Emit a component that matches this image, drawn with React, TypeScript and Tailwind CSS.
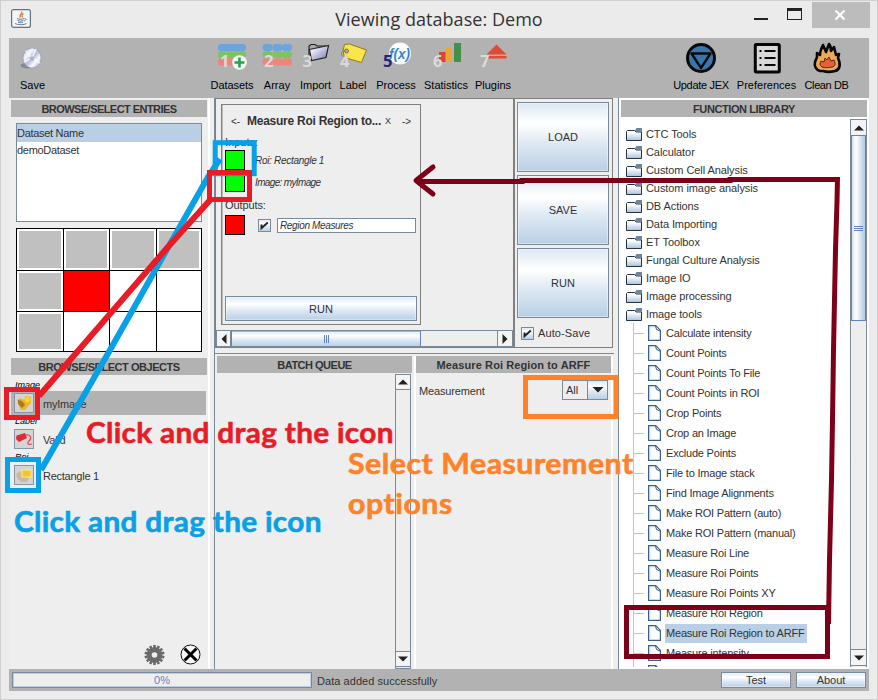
import type { ReactNode } from "react";

const METAL =
  "bg-[linear-gradient(to_bottom,#dde8f3_0%,#ffffff_30%,#dde8f3_60%,#b8cfe5_100%)]";
const METAL_H =
  "bg-[linear-gradient(to_right,#cfdff0_0%,#ffffff_30%,#dde8f3_60%,#b0c8e4_100%)]";

function PanelHeader({ children }: { children: ReactNode }) {
  return (
    <div className="flex h-[17px] shrink-0 items-center justify-center bg-[#b2b2b2] pt-px text-[11px] font-bold whitespace-nowrap text-[#333]">
      {children}
    </div>
  );
}

function Tool({ label, width, children }: { label: ReactNode; width: string; children: ReactNode }) {
  return (
    <div className={`flex h-[60px] shrink-0 flex-col items-center ${width}`}>
      <svg className="h-[38px] w-[40px] overflow-visible" viewBox="0 0 40 38">
        {children}
      </svg>
      <span className="text-[11px] leading-[18px] whitespace-nowrap text-black">{label}</span>
    </div>
  );
}

function Digit({ x, n, fill = "#dadada" }: { x: number; n: string; fill?: string }) {
  return (
    <text x={x} y="28.7" fill={fill} fontSize="16.5" fontWeight="bold" fontFamily="Noto Sans, sans-serif">
      {n}
    </text>
  );
}

function MetalButton({ children, className }: { children: ReactNode; className: string }) {
  return (
    <button
      className={`flex shrink-0 items-center justify-center border border-[#7a8a99] text-[11px] text-[#333] shadow-[inset_0_0_0_1px_#ffffff66] ${METAL} ${className}`}
    >
      <span className="pt-px">{children}</span>
    </button>
  );
}

function Check() {
  return (
    <span className={`flex size-[13px] shrink-0 items-center justify-center border border-[#7a8a99] ${METAL}`}>
      <svg width="9" height="9" viewBox="0 0 9 9">
        <path d="M1.5 3.5v3.7L7.8 1.5" fill="none" stroke="#222" strokeWidth="1.9" />
      </svg>
    </span>
  );
}

function Arrow({ dir }: { dir: "up" | "down" | "left" | "right" }) {
  const d = {
    up: "M0 7.5h10L5 2.5z",
    down: "M0 2.5h10L5 7.5z",
    left: "M7.5 0v10L2.5 5z",
    right: "M2.5 0v10L7.5 5z",
  }[dir];
  return (
    <svg width="10" height="10" viewBox="0 0 10 10">
      <path d={d} fill="#222" />
    </svg>
  );
}

function FolderIcon() {
  return (
    <svg className="mr-1 shrink-0" width="16" height="14" viewBox="0 0 16 14">
      <defs>
        <linearGradient id="folder" x1="0" y1="0" x2="0" y2="1">
          <stop offset="0.2" stopColor="#fff" />
          <stop offset="1" stopColor="#a9c2dc" />
        </linearGradient>
      </defs>
      <path d="M.5 13.5v-9l1-1h7l1.500 1.500h5.500v8.500z" fill="url(#folder)" stroke="#26323f" />
      <path d="M9 3.500L10.500 1H16v4h-6z" fill="#6c84a0" />
    </svg>
  );
}

function FileIcon() {
  return (
    <svg className="mr-[5px] shrink-0" width="13" height="16" viewBox="0 0 13 16">
      <path d="M.6.6h7.2l4.6 4.9v9.9H.6z" fill="#fff" stroke="#3a5f8d" strokeWidth="1.2" />
      <path d="M1.8 14.2V1.8h5" fill="none" stroke="#b8cfe5" />
      <path d="M7.5 1l1 3.5L12 6" fill="#dde8f3" stroke="#3a5f8d" />
    </svg>
  );
}

const folders = [
  "CTC Tools",
  "Calculator",
  "Custom Cell Analysis",
  "Custom image analysis",
  "DB Actions",
  "Data Importing",
  "ET Toolbox",
  "Fungal Culture Analysis",
  "Image IO",
  "Image processing",
  "Image tools",
];

const files = [
  "Calculate intensity",
  "Count Points",
  "Count Points To File",
  "Count Points in ROI",
  "Crop Points",
  "Crop an Image",
  "Exclude Points",
  "File to Image stack",
  "Find Image Alignments",
  "Make ROI Pattern (auto)",
  "Make ROI Pattern (manual)",
  "Measure Roi Line",
  "Measure Roi Points",
  "Measure Roi Points XY",
  "Measure Roi Region",
  "Measure Roi Region to ARFF",
  "Measure intensity",
  "",
];

function TitleBar() {
  return (
    <div className="flex h-[37px] shrink-0 items-start">
      <div className="w-[120px] pt-[8px] pl-[10px]">
        <svg width="20" height="19" viewBox="0 0 20 19">
          <rect x=".6" y=".6" width="18.8" height="17.8" rx="2" fill="#f4f5f6" stroke="#5d7488" strokeWidth="1.2" />
          <path d="M10.5 2.5c2 2-3.500 3-1 6M12.500 4.500c-2 1-2 2-1 4" fill="none" stroke="#dd7b3c" strokeWidth="1.300" />
          <path d="M6 9.500c2 1 5 1 7 0M6.500 11.500c2 .8 4 .8 6 0M7 13.200c2 .6 3 .6 5 0M4 14.500c3 1.800 9 1.600 11.500 0M13.500 9.500c2.500 0 1.500 2-.500 2.500" fill="none" stroke="#5d7f9e" strokeWidth="1" />
        </svg>
      </div>
      <div className="flex-1 pt-[5px] text-center font-['Open_Sans','Noto_Sans',sans-serif] text-[18px] leading-[26px] text-[#333]">
        <span className="tracking-[0.04px]">Viewing database: Demo</span>
      </div>
      <div className="flex w-[120px] items-start">
        <div className="mt-[17px] -ml-[3px] h-[2px] w-[14px] bg-[#222]" />
        <div className="mt-[7px] ml-[19px] h-[12px] w-[15px] border border-t-[3px] border-[#222]" />
        <div className="mt-px ml-[10px] flex h-[26px] w-[58px] items-center justify-center bg-[#bcbcbc]">
          <svg className="-translate-x-px" width="12" height="10" viewBox="0 0 12 10">
            <path d="M1.500.500l9 9M10.500.500l-9 9" stroke="#fff" strokeWidth="2.200" />
          </svg>
        </div>
      </div>
    </div>
  );
}

function Toolbar() {
  const rows = ["#6ba5dc", "#7fc35c", "#f08577"];
  return (
    <div className="flex h-[60px] shrink-0 bg-[#b2b2b2]">
      <Tool label="Save" width="w-[47px]">
        <defs>
          <linearGradient id="disc" x1="0" y1="0" x2="1" y2="1">
            <stop offset="0" stopColor="#98a4cb" />
            <stop offset=".3" stopColor="#f7f8ff" />
            <stop offset=".5" stopColor="#b3bddc" />
            <stop offset=".7" stopColor="#fafaff" />
            <stop offset="1" stopColor="#8592bd" />
          </linearGradient>
        </defs>
        <ellipse cx="14.500" cy="27.500" rx="7" ry="3" fill="#888b94" />
        <ellipse cx="19" cy="20" rx="9" ry="10" fill="url(#disc)" stroke="#8c95b0" strokeWidth=".6" />
        <path d="M19 20L12.500 12.500M19 20l8 5M19 20l-7.500 4M19 20l4-9" stroke="#fff" strokeWidth="1.500" opacity=".7" />
        <circle cx="19" cy="20.500" r="1.700" fill="#bbb" stroke="#929292" strokeWidth=".6" />
      </Tool>
      <div className="w-[153px]" />
      <div className="flex">
        <Tool label={<span className="tracking-[-0.05px]">Datasets</span>} width="w-[46px]">
          {rows.map((c, i) => (
            <rect key={c} x="6" y={6 + i * 7.300} width="28" height="7" rx="3" fill={c} />
          ))}
          <Digit x={8} n="1" />
          <circle cx="27.500" cy="24.500" r="7.300" fill="#f5f8f2" />
          <path d="M27.500 19.500v10M22.500 24.500h10" stroke="#22a055" strokeWidth="2.500" />
        </Tool>
        <Tool label="Array" width="w-[44px]">
          {rows.map((c, i) =>
            [5.500, 15.500, 25].map((x) => (
              <rect key={c + x} x={x} y={6 + i * 7.300} width="10" height="7" rx="3.200" fill={c} />
            )),
          )}
          <Digit x={7} n="2" />
        </Tool>
        <Tool label="Import" width="w-[33px]">
          <defs>
            <linearGradient id="import" x1="0" y1="0" x2="1" y2="1">
              <stop offset=".2" stopColor="#f3f3ff" />
              <stop offset="1" stopColor="#7373ac" />
            </linearGradient>
          </defs>
          <path d="M13 21V8l2-1.500h4l2 1.500h9v4" fill="#a9a9b4" stroke="#222" strokeWidth="1.200" />
          <path d="M13.500 11.500l19-4-2.500 12-14.500 3z" fill="url(#import)" stroke="#222" strokeWidth="1.200" />
          <Digit x={6.500} n="3" />
        </Tool>
        <Tool label="Label" width="w-[42px]">
          <path d="M10 13l1.500-6.500 5-.500 17 6-5 12.500-17-5z" fill="#fbe54c" stroke="#8e7b1d" strokeWidth="1" />
          <circle cx="13.500" cy="13" r="2" fill="#b2b2b2" stroke="#6f6022" strokeWidth=".8" />
          <path d="M13 13c-5-1-6 5-3 5" fill="none" stroke="#887728" strokeWidth=".8" />
          <Digit x={7} n="4" />
        </Tool>
        <Tool label="Process" width="w-[44px]">
          <circle cx="24" cy="15.500" r="11" fill="#fafdff" />
          <text x="13" y="21" fill="#3684d0" fontSize="15.500" fontStyle="italic" fontWeight="bold" textLength="21" lengthAdjust="spacingAndGlyphs" fontFamily="Liberation Sans, sans-serif">
            f(x)
          </text>
          <Digit x={7} n="5" fill="#27247c" />
        </Tool>
        <Tool label="Statistics" width="w-[56px]">
          <rect x="13" y="14" width="6.500" height="10" fill="#d9472f" />
          <rect x="20" y="9" width="6" height="15" fill="#eda63a" />
          <rect x="28" y="5" width="7" height="19" fill="#448f4b" />
          <Digit x={7} n="6" />
        </Tool>
        <Tool label="Plugins" width="w-[38px]">
          <path d="M13.500 16.500L23.500 6.500 33.500 16.500z" fill="#e14b32" />
          <rect x="13.500" y="18" width="20" height="2.500" fill="#e14b32" />
          <Digit x={7} n="7" />
        </Tool>
      </div>
      <div className="flex-1" />
      <Tool label={<span className="tracking-[-0.3px]">Update JEX</span>} width="w-[62px]">
        <circle cx="20" cy="20" r="13.500" fill="#3a76ae" stroke="#080808" strokeWidth="3" />
        <path d="M10.500 15.500h19L20 30z" fill="#3a76ae" stroke="#080808" strokeWidth="2.300" strokeLinejoin="round" />
      </Tool>
      <Tool label="Preferences" width="w-[69px]">
        <rect x="8.300" y="6.500" width="24" height="27.500" rx="1" fill="#d8d8d8" stroke="#050505" strokeWidth="3" />
        <path d="M12.500 13h2M17.500 13h11M12.500 20h2M17.500 20h11M12.500 27h2M17.500 27h11" stroke="#050505" strokeWidth="2.200" />
      </Tool>
      <Tool label={<span className="tracking-[-0.4px]">Clean DB</span>} width="w-[51px]">
        <path d="M13 33c-4-1-6-5-5-9l2-5v-4l3 2c0-3 1-6 3-10l3 7 3-8c2 2 2 4 2 7l3-4 2 8 3-1-1 4c3 6 2 12-3 13-4 1-9 1-12 0z" fill="#ecaa57" stroke="#090909" strokeWidth="2.600" strokeLinejoin="round" />
        <path d="M15 29c-3-2-2-4-1-6l3 1 1-4 2 2 2-3 2 4 3-1c2 4 1 7-2 7-4 1-7 1-10 0z" fill="#e3603b" stroke="#59251b" strokeWidth="1" />
      </Tool>
      <div className="w-[17px]" />
    </div>
  );
}

function ObjectRow({ name, selected, children }: { name: string; selected?: boolean; children: ReactNode }) {
  return (
    <div className={`flex h-[24px] items-center pl-[3px] text-[11px] text-[#333] ${selected ? "bg-[#b2b2b2]" : ""}`}>
      <div className="mr-[9px] flex size-[20px] items-center justify-center border border-[#8795a5] bg-[#d4d4d4]">
        <svg width="18" height="18" viewBox="0 0 18 18">{children}</svg>
      </div>
      <span className="pt-[2px] tracking-[-0.25px]">{name}</span>
    </div>
  );
}

function LeftColumn() {
  const cells = Array.from({ length: 12 }, (_, i) => i);
  return (
    <div className="flex w-[201px] shrink-0 flex-col border-r-2 border-white pt-[2px] pr-px pl-[2px]">
      <PanelHeader>
        <span className="tracking-[-0.55px]">BROWSE/SELECT ENTRIES</span>
      </PanelHeader>
      <div className="mt-[6px] ml-[5px] h-[99px] w-[186px] border border-[#7a8a99] bg-white text-[11px] text-[#333]">
        <div className="flex h-[18px] items-center bg-[#b8cfe5] pt-px tracking-[-0.3px]">Dataset Name</div>
        <div className="flex h-[17px] items-center tracking-[-0.3px]">demoDataset</div>
      </div>
      <div className="mt-[6px] ml-[5px] grid h-[124px] w-[186px] grid-cols-[46px_45px_46px_44px] grid-rows-[41px_40px_39px] gap-px border border-black bg-black">
        {cells.map((i) =>
          i === 5 ? (
            <div key={i} className="bg-[#ff0000]" />
          ) : i < 4 || i % 4 === 0 ? (
            <div key={i} className="bg-white p-[2px]">
              <div className="h-full bg-[#c0c0c0]" />
            </div>
          ) : (
            <div key={i} className="bg-white" />
          ),
        )}
      </div>
      <div className="mt-[6px]">
        <PanelHeader>
          <span className="tracking-[-0.45px]">BROWSE/SELECT OBJECTS</span>
        </PanelHeader>
      </div>
      <div className="mr-px text-[9px] text-black">
        <div className="flex h-[16px] items-end pb-px pl-[4px] leading-none italic">Image</div>
        <ObjectRow name="myImage" selected>
          <path d="M2 6l3-2 3 2 3-4 5 1v6l-3 3-3 4H6l-2-4z" fill="#f0b323" />
          <path d="M3 6l4 1 3 4-3 3-4-4z" fill="#a87928" />
          <path d="M9 5l4-3 3 4-4 3z" fill="#fcd542" />
        </ObjectRow>
        <div className="flex h-[12px] items-end pb-px pl-[4px] leading-none italic">Label</div>
        <ObjectRow name="Valid">
          <path d="M1.500 5.500L10 3l2 5-8 4-3-3z" fill="#e02a35" />
          <path d="M10 5c6-1 7 3 4 6s0 4 3 3" fill="none" stroke="#e34b54" strokeWidth="1.300" />
        </ObjectRow>
        <div className="flex h-[12px] items-end pb-px pl-[4px] leading-none italic">Roi</div>
        <ObjectRow name="Rectangle 1">
          <path d="M1 8l4-3 5 5 4 2-2 4H6l-4-4z" fill="#c8baa0" />
          <rect x="7" y="4" width="9" height="7" fill="#f4c52e" stroke="#fbe78b" />
        </ObjectRow>
      </div>
      <div className="flex flex-1 items-end justify-end gap-[15px] pr-[6px] pb-[4px]">
        <svg width="21" height="20" viewBox="0 0 20 20">
          {Array.from({ length: 7 }, (_, i) => (
            <rect key={i} x="8.700" y="0" width="2.600" height="20" fill="#6a6a6a" transform={`rotate(${(i * 180) / 7} 10 10)`} />
          ))}
          <circle cx="10" cy="10" r="7.800" fill="#6a6a6a" />
          <circle cx="10" cy="10" r="2.800" fill="#eee" />
        </svg>
        <svg width="21" height="21" viewBox="0 0 21 21">
          <circle cx="10.500" cy="10.500" r="9.500" fill="#f6f6f6" stroke="#111" />
          <path d="M4.500 4.500l12 12M16.500 4.500l-12 12" stroke="#000" strokeWidth="3" />
        </svg>
      </div>
    </div>
  );
}

function Center() {
  return (
    <div className="flex w-[400px] shrink-0 flex-col border-l border-[#7a8a99]">
      <div className="flex h-[250px] w-[398px] shrink-0 border border-[#808080]">
        <div className="flex w-[297px] shrink-0 flex-col">
          <div className="flex h-[231px] flex-col pt-[5px] pl-[5px]">
            <div className="flex h-[221px] w-[200px] flex-col border border-[#808080] px-[3px] text-[11px] text-[#333] shadow-[inset_1px_0_0_#bbb]">
              <div className="flex h-[32px] items-center pl-[6px]">
                <span className="w-[16px] text-[10px]">&lt;-</span>
                <span className="w-[138px] text-[12px] font-bold tracking-[-0.25px] whitespace-nowrap">Measure Roi Region to...</span>
                <span className="w-[17px] text-[9px] leading-none">X</span>
                <span className="text-[10px]">-&gt;</span>
              </div>
              <div className="flex h-[12px] items-end leading-[14px]">Inputs:</div>
              <div className="flex h-[22px] items-center">
                <div className="size-[20px] border border-black bg-[#00ff00]" />
                <span className="ml-[10px] text-[10px] tracking-[-0.3px] italic">Roi: Rectangle 1</span>
              </div>
              <div className="flex h-[22px] items-center">
                <div className="size-[20px] border border-black bg-[#00ff00]" />
                <span className="ml-[10px] text-[10px] tracking-[-0.65px] italic">Image: myImage</span>
              </div>
              <div className="flex h-[21px] items-center pt-[3px] tracking-[-0.1px]">Outputs:</div>
              <div className="flex h-[22px] items-center">
                <div className="size-[20px] border border-black bg-[#ff0000]" />
                <span className="mr-[6px] ml-[13px] flex"><Check /></span>
                <div className="flex h-[15px] w-[139px] items-center border border-[#7a8a99] bg-white pl-[2px] text-[10px] tracking-[-0.35px] italic">
                  Region Measures
                </div>
              </div>
              <div className="flex-1" />
              <MetalButton className="mb-[3px] h-[25px] w-[192px]">RUN</MetalButton>
            </div>
          </div>
          <div className="flex h-[17px] border border-[#7a8a99] bg-[#eee]">
            <div className="flex w-[14px] items-center justify-center border-r border-[#7a8a99] bg-[#f4f4f4]"><Arrow dir="left" /></div>
            <div className={`flex w-[190px] items-center justify-center gap-px border-x border-[#6382bf] shadow-[inset_0_1px_0_#a3b8cc] ${METAL}`}>
              <i className="h-[8px] w-px bg-[#6382bf]" />
              <i className="h-[8px] w-px bg-[#6382bf]" />
              <i className="h-[8px] w-px bg-[#6382bf]" />
            </div>
            <div className="flex-1" />
            <div className="flex w-[15px] items-center justify-center border-l border-[#7a8a99] bg-[#f4f4f4]"><Arrow dir="right" /></div>
          </div>
        </div>
        <div className="flex flex-1 flex-col gap-[3px] border-l-2 border-[#808080] pt-[3px] pl-[2px]">
          <MetalButton className="h-[70px] w-[92px]">LOAD</MetalButton>
          <MetalButton className="h-[70px] w-[92px]">SAVE</MetalButton>
          <MetalButton className="h-[70px] w-[92px]">RUN</MetalButton>
          <div className="flex items-center gap-[4px] pt-[5px] pl-[4px] text-[11px] leading-[14px] text-[#333]">
            <Check />
            <span className="tracking-[0.1px]">Auto-Save</span>
          </div>
        </div>
      </div>
      <div className="mt-[5px] flex flex-1 border-t border-[#7a8a99] pt-[2px]">
        <div className="flex w-[197px] flex-col">
          <div className="ml-[2px]">
            <PanelHeader>
              <span className="tracking-[-0.5px]">BATCH QUEUE</span>
            </PanelHeader>
          </div>
          <div className="mt-px flex flex-1 justify-end pr-px">
            <div className="flex w-[16px] flex-col border border-[#7a8a99]">
              <div className="flex h-[15px] items-center justify-center border-b border-[#7a8a99] bg-[#f4f4f4]"><Arrow dir="up" /></div>
              <div className="flex-1" />
              <div className="mb-px flex h-[16px] items-center justify-center border-y border-[#7a8a99] bg-[#f4f4f4]"><Arrow dir="down" /></div>
            </div>
          </div>
        </div>
        <div className="ml-[2px] flex w-[199px] flex-col border-x-2 border-white">
          <PanelHeader>
            <span className="tracking-[0.1px]">Measure Roi Region to ARFF</span>
          </PanelHeader>
          <div className="flex items-start justify-between pt-[7px] pr-[3px] pl-[3px] text-[11px] text-[#333]">
            <span className="pt-[3px] leading-[16px] tracking-[-0.15px]">Measurement</span>
            <div className="flex h-[20px] w-[46px] border border-[#7a8a99]">
              <div className="flex w-[24px] items-center pl-[3px] text-[11px]">All</div>
              <div className={`flex flex-1 items-center justify-center border-l border-[#7a8a99] ${METAL}`}>
                <svg width="12" height="6" viewBox="0 0 12 6"><path d="M.500 0h11L6 5.500z" fill="#222" /></svg>
              </div>
            </div>
          </div>
        </div>
      </div>
    </div>
  );
}

function FunctionLibrary() {
  return (
    <div className="flex w-[251px] shrink-0 flex-col border-l border-[#7a8a99] bg-white pt-[2px] pr-[2px] pl-[2px]">
      <PanelHeader>
        <span className="tracking-[-0.4px]">FUNCTION LIBRARY</span>
      </PanelHeader>
      <div className="mt-[2px] mb-[2px] flex h-[548px] overflow-hidden">
        <div className="flex w-[229px] flex-col pt-[6px] pl-[5px] text-[11px] tracking-[-0.2px] text-[#333]">
          {folders.map((f) => (
            <div key={f} className="flex h-[18px] shrink-0 items-center tracking-[-0.08px] whitespace-nowrap">
              <FolderIcon />
              {f}
            </div>
          ))}
          <div className="ml-[7px] border-l border-[#b8c5d3]">
            {files.map((f) => (
              <div key={f} className="flex h-[20px] items-center whitespace-nowrap">
                <span className="mr-[4px] h-px w-[10px] bg-[#b8c5d3]" />
                <FileIcon />
                {f.endsWith("ARFF") ? (
                  <span className="-ml-px flex h-[19px] w-[142px] items-center bg-[#b8cfe5] pl-px">{f}</span>
                ) : (
                  f
                )}
              </div>
            ))}
          </div>
        </div>
        <div className="flex w-[17px] flex-col border-x border-t border-[#7a8a99] bg-[#eee]">
          <div className="flex h-[15px] shrink-0 items-center justify-center bg-[#f4f4f4]"><Arrow dir="up" /></div>
          <div className={`flex h-[186px] shrink-0 flex-col items-center justify-center gap-px border border-[#6382bf] ${METAL_H}`}>
            <i className="h-px w-[9px] bg-[#6382bf]" />
            <i className="h-px w-[9px] bg-[#6382bf]" />
            <i className="h-px w-[9px] bg-[#6382bf]" />
          </div>
          <div className="flex-1" />
          <div className="mb-px flex h-[17px] shrink-0 items-center justify-center border-y border-[#7a8a99] bg-[#f4f4f4]"><Arrow dir="down" /></div>
        </div>
      </div>
    </div>
  );
}

function StatusBar() {
  return (
    <div className="flex h-[22px] shrink-0 items-center bg-[#b2b2b2] pr-[3px] pl-[3px] text-[11px] text-[#333]">
      <div className="flex h-[16px] w-[300px] items-center justify-center border border-[#7a8a99] bg-[#eee] text-[#6382bf] shadow-[inset_0_0_0_1px_#b8cfe5]">
        0%
      </div>
      <span className="ml-[5px] flex-1 pt-[2px] tracking-[0.05px]">Data added successfully</span>
      <MetalButton className="mr-[5px] h-[16px] w-[70px]">Test</MetalButton>
      <MetalButton className="h-[16px] w-[70px]">About</MetalButton>
    </div>
  );
}

function Annotations() {
  return (
    <>
      <svg className="pointer-events-none absolute top-0 left-0" width="878" height="700" viewBox="0 0 878 700" fill="none">
        <g stroke="#08a0e6" strokeWidth="5">
          <rect x="215.200" y="142.700" width="39" height="31" />
          <rect x="7.500" y="459.500" width="31" height="31" />
          <path d="M41 470L110 350 208 177 220 159" strokeWidth="6" />
        </g>
        <g stroke="#e81c26" strokeWidth="5">
          <rect x="209.500" y="172.500" width="40" height="27" />
          <rect x="6.500" y="389.500" width="31" height="28" />
          <path d="M39 396L167 248 211 199" strokeWidth="6" />
        </g>
        <rect x="525.500" y="377.500" width="90.500" height="39" stroke="#ff8228" strokeWidth="5" />
        <g stroke="#7d0018" strokeWidth="5">
          <path d="M417 181.500H522V180.500H730V179.500H838" />
          <path d="M433 167L416 180.500 433 194" strokeLinecap="round" strokeLinejoin="round" />
          <path d="M837.500 177L837 202 835.500 250 834.500 300 833.500 350 832.500 420 831.500 480 829.500 560 828.500 624" />
          <rect x="626.500" y="607.500" width="201" height="49" />
        </g>
      </svg>
      <div className="absolute top-[414px] left-[86px] origin-left scale-x-[1.027] font-['Lato',sans-serif] text-[29px] leading-[36px] font-bold tracking-[0.3px] whitespace-nowrap text-[#e81c26] [-webkit-text-stroke:0.6px_#e81c26]">
        Click and drag the icon
      </div>
      <div className="absolute top-[503px] left-[14px] origin-left scale-x-[1.027] font-['Lato',sans-serif] text-[29px] leading-[36px] font-bold tracking-[0.3px] whitespace-nowrap text-[#08a0e6] [-webkit-text-stroke:0.6px_#08a0e6]">
        Click and drag the icon
      </div>
      <div className="absolute top-[443px] left-[348px] origin-left scale-x-[1.044] font-['Lato',sans-serif] text-[29px] leading-[40px] font-bold tracking-[0.5px] whitespace-nowrap text-[#ff8228] [-webkit-text-stroke:0.6px_#ff8228]">
        Select Measurement
        <br />
        options
      </div>
    </>
  );
}

export default function App() {
  return (
    <div className="relative flex h-[700px] w-[878px] flex-col overflow-hidden border border-[#cfcfcf] bg-[#ebebeb] px-[8px] font-['Liberation_Sans',Arial,sans-serif]">
      <div className="-mr-[8px] -ml-[8px] flex flex-col">
        <TitleBar />
      </div>
      <div className="flex h-[653px] w-[860px] shrink-0 flex-col bg-[#eee]">
        <Toolbar />
        <div className="flex h-[571px] shrink-0">
          <LeftColumn />
          <div className="w-[4px]" />
          <Center />
          <div className="flex-1" />
          <FunctionLibrary />
        </div>
        <StatusBar />
      </div>
      <div className="absolute -top-px -left-px">
        <Annotations />
      </div>
    </div>
  );
}
